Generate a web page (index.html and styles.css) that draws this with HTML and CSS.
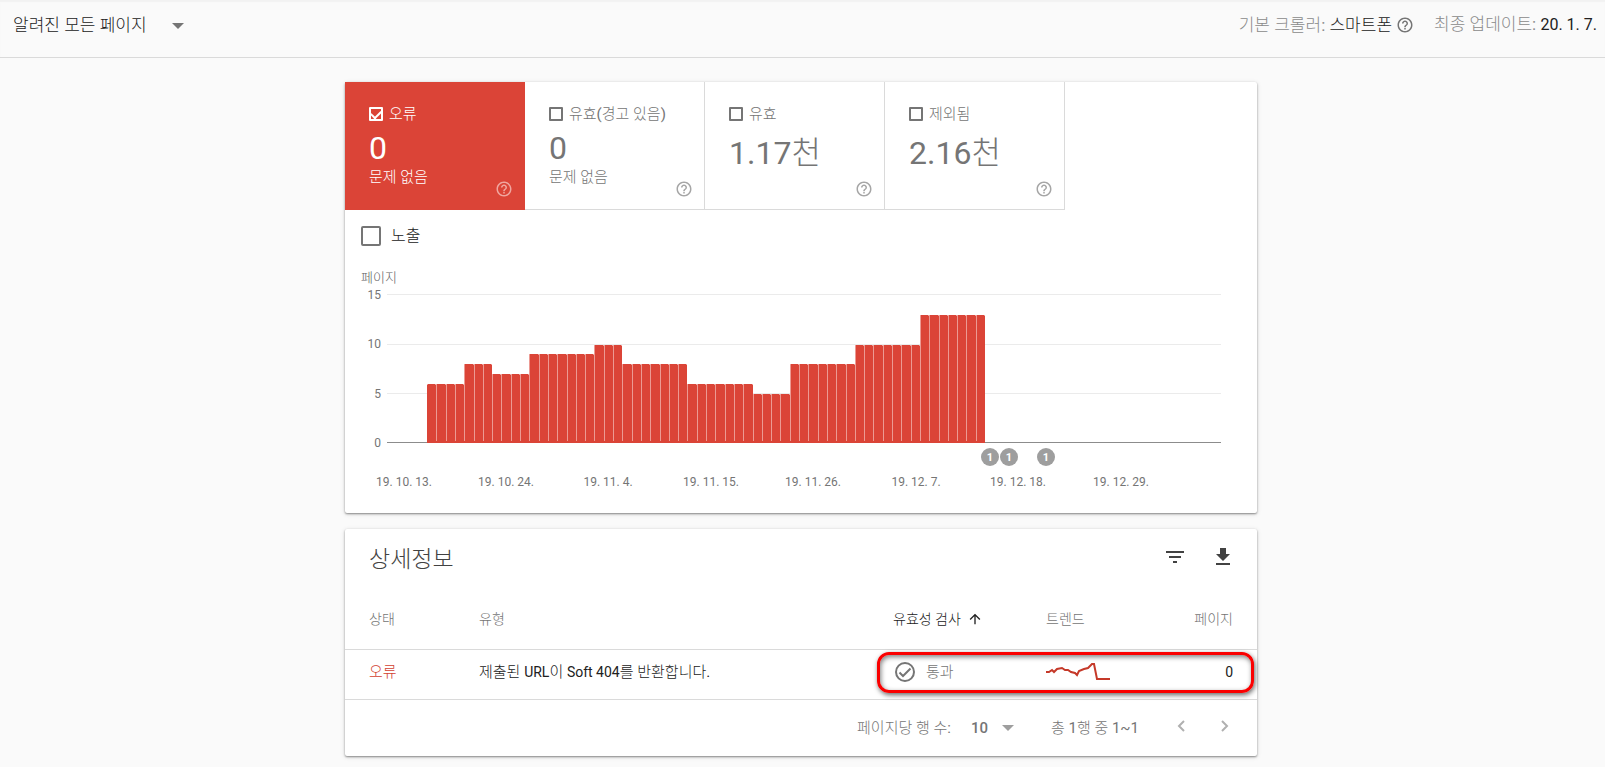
FILE: index.html
```html
<!DOCTYPE html>
<html lang="ko">
<head>
<meta charset="utf-8">
<title>색인 생성 범위</title>
<link rel="stylesheet" href="styles.css">
</head>
<body>
<svg class="defs" aria-hidden="true">
  <symbol id="help" viewBox="0 0 24 24"><path d="M11 18h2v-2h-2v2zm1-16C6.48 2 2 6.48 2 12s4.48 10 10 10 10-4.48 10-10S17.52 2 12 2zm0 18c-4.41 0-8-3.59-8-8s3.59-8 8-8 8 3.59 8 8-3.59 8-8 8zm0-14c-2.21 0-4 1.79-4 4h2c0-1.1.9-2 2-2s2 .9 2 2c0 2-3 1.750-3 5h2c0-2.250 3-2.500 3-5 0-2.210-1.790-4-4-4z"/></symbol>
  <symbol id="caret" viewBox="0 0 12 6"><path d="M0 0h12L6 6z"/></symbol>
</svg>
<header class="topbar">
  <div class="picker picker-page">
    <select aria-label="페이지 필터"><option>알려진 모든 페이지</option></select>
    <svg class="caret"><use href="#caret"/></svg>
  </div>
  <div class="meta">
    <span>기본 크롤러: <b>스마트폰</b></span>
    <button class="help" aria-label="도움말"><svg><use href="#help"/></svg></button>
    <span class="updated">최종 업데이트: <b class="date">20. 1. 7.</b></span>
  </div>
</header>
<main>
  <section class="card">
    <div class="tabs">
      <div class="tab active">
        <div class="tab-body">
          <label><input type="checkbox" class="box" checked>오류</label>
          <div class="value">0</div>
          <div class="note">문제 없음</div>
        </div>
        <button class="help" aria-label="도움말"><svg><use href="#help"/></svg></button>
      </div>
      <div class="tab">
        <div class="tab-body">
          <label><input type="checkbox" class="box">유효(경고 있음)</label>
          <div class="value">0</div>
          <div class="note">문제 없음</div>
        </div>
        <button class="help" aria-label="도움말"><svg><use href="#help"/></svg></button>
      </div>
      <div class="tab">
        <div class="tab-body">
          <label><input type="checkbox" class="box">유효</label>
          <div class="value tall">1.17천</div>
        </div>
        <button class="help" aria-label="도움말"><svg><use href="#help"/></svg></button>
      </div>
      <div class="tab">
        <div class="tab-body">
          <label><input type="checkbox" class="box">제외됨</label>
          <div class="value tall">2.16천</div>
        </div>
        <button class="help" aria-label="도움말"><svg><use href="#help"/></svg></button>
      </div>
    </div>
    <label class="impressions"><input type="checkbox" class="box large">노출</label>
    <svg class="chart" viewBox="0 1 912 257" role="img" aria-label="날짜별 오류 페이지">
      <text class="axis-title" x="16" y="27">페이지</text>
      <g class="grid"><path d="M42 39.500H876M42 89.500H876M42 138.500H876"/></g>
      <path class="baseline" d="M42 187.500H876"/>
      <g class="ticks-y">
        <text x="36" y="44">15</text><text x="36" y="93">10</text><text x="36" y="143">5</text><text x="36" y="192">0</text>
      </g>
      <g id="bars"></g>
      <g class="ticks-x">
        <text x="59" y="231">19. 10. 13.</text><text x="161" y="231">19. 10. 24.</text><text x="263" y="231">19. 11. 4.</text><text x="366" y="231">19. 11. 15.</text><text x="468" y="231">19. 11. 26.</text><text x="571" y="231">19. 12. 7.</text><text x="673" y="231">19. 12. 18.</text><text x="776" y="231">19. 12. 29.</text>
      </g>
      <g class="markers">
        <circle cx="645" cy="202" r="9"/><circle cx="664" cy="202" r="9"/><circle cx="701" cy="202" r="9"/>
        <text x="645" y="206">1</text><text x="664" y="206">1</text><text x="701" y="206">1</text>
      </g>
    </svg>
  </section>

  <section class="card">
    <div class="toolbar">
      <h2>상세정보</h2>
      <button aria-label="필터"><svg viewBox="0 0 24 24"><path d="M10 18h4v-2h-4v2zM3 6v2h18V6H3zm3 7h12v-2H6v2z"/></svg></button>
      <button aria-label="다운로드"><svg viewBox="0 0 24 24"><path d="M19 9h-4V3H9v6H5l7 7 7-7zM5 18v2h14v-2H5z"/></svg></button>
    </div>
    <div class="table-wrap">
      <table>
        <colgroup><col class="c-state"><col><col class="c-check"><col class="c-trend"><col class="c-pages"></colgroup>
        <thead>
          <tr><th>상태</th><th>유형</th><th class="sorted"><span class="with-icon">유효성 검사 <svg viewBox="0 0 24 24"><path d="M4 12l1.410 1.410L11 7.830V20h2V7.830l5.580 5.590L20 12l-8-8-8 8z"/></svg></span></th><th>트렌드</th><th>페이지</th></tr>
        </thead>
        <tbody>
          <tr>
            <td class="error">오류</td>
            <td>제출된 <span class="latin">URL</span>이 <span class="latin">Soft 404</span>를 반환합니다.</td>
            <td class="passed"><span class="with-icon"><svg viewBox="0 0 24 24"><circle cx="12" cy="12" r="9"/><path d="M6.500 12.500l3.500 3.500 7.500-7.500"/></svg>통과</span></td>
            <td><svg class="spark" viewBox="0 0 64 20"><path d="M0 10H3L6 8L8 10L11 7L16 6L19 8H22L25 10L29 11L31 13L33 9L38 7L42 6L46 2H48L51 17H64"/></svg></td>
            <td><span class="latin">0</span></td>
          </tr>
        </tbody>
      </table>
      <div class="highlight"></div>
    </div>
    <footer class="pager">
      <label for="rows">페이지당 행 수:</label>
      <div class="picker picker-rows">
        <select id="rows"><option>10</option></select>
        <svg class="caret"><use href="#caret"/></svg>
      </div>
      <span class="range">총 1행 중 1~1</span>
      <button aria-label="이전" disabled><svg viewBox="0 0 24 24"><path d="M15 7l-5 5 5 5"/></svg></button>
      <button aria-label="다음" disabled><svg viewBox="0 0 24 24"><path d="M9 7l5 5-5 5"/></svg></button>
    </footer>
  </section>
</main>
<script src="chart.js"></script>
</body>
</html>
```
FILE: styles.css
```css
* { box-sizing: border-box; }

body {
  margin: 0;
  background: #fafafa;
  color: #212121;
  font: 15px/20px Roboto, "Noto Sans CJK KR Light", "Noto Sans CJK KR", sans-serif;
}

.defs { display: none; }

svg { display: block; fill: currentColor; }

b { font-weight: 400; color: #212121; }

button {
  flex: none;
  width: 24px;
  height: 24px;
  padding: 0;
  border: 0;
  background: none;
  color: inherit;
}

button svg { width: 100%; height: 100%; }

.help { width: 18px; height: 18px; color: #757575; }

.latin { font-size: 14px; }

/* Top bar */
.topbar {
  display: flex;
  align-items: center;
  justify-content: space-between;
  height: 58px;
  padding: 0 8px 8px 13px;
  border-bottom: 1px solid #dadada;
  box-shadow: inset 0 2px 1px #f2f2f2;
  font-size: 17px;
}

.picker { display: grid; align-items: center; }

.picker > * { grid-area: 1 / 1; }

.picker select {
  appearance: none;
  margin: 0;
  padding: 0;
  border: 0;
  background: none;
  color: inherit;
  font: inherit;
}

.picker-page select { padding-right: 37px; }

.caret {
  justify-self: end;
  width: 12px;
  height: 6px;
  color: #757575;
  pointer-events: none;
}

.picker-page .caret { margin-top: 2px; }

.meta { display: flex; align-items: center; color: #8a8a8a; }

.meta .help { margin: 0 20px 0 4px; }

.date { font-size: 16px; }

/* Cards */
main { padding: 24px 3px 8px 0; }

.card {
  max-width: 912px;
  margin: 0 auto;
  border-radius: 2px;
  background: #fff;
  box-shadow: 0 1px 2px rgba(0, 0, 0, .4), 0 1px 5px rgba(0, 0, 0, .14);
}

.card + .card { margin-top: 16px; }

.tabs { display: flex; }

.tab {
  display: flex;
  flex: 0 1 180px;
  justify-content: space-between;
  height: 128px;
  padding: 22px 11px 11px 24px;
  border: solid #dadada;
  border-width: 0 1px 1px 0;
  color: #757575;
}

.tab.active { border-color: #db4437; background: #db4437; color: #fff; }

.tab-body { flex: 1; white-space: nowrap; }

.tab .help { align-self: flex-end; margin-left: -18px; color: #a6a6a6; }

.tab.active .help { color: #f0a69f; }

label { display: flex; align-items: center; }

.box {
  appearance: none;
  display: grid;
  place-items: center;
  width: 14px;
  height: 14px;
  margin: 0 6px 0 0;
  border: 2px solid;
  border-radius: 1px;
  color: inherit;
}

.box:checked::before {
  content: "";
  width: 8px;
  height: 5px;
  margin-bottom: 2px;
  border: solid;
  border-width: 0 0 2px 2px;
  rotate: -45deg;
}

.box.large {
  width: 20px;
  height: 20px;
  margin-right: 10px;
  border-radius: 2px;
  color: #757575;
}

.value { margin-top: 6px; font-size: 32px; line-height: 37px; }

.value.tall { line-height: 47px; }

.impressions { height: 46px; padding: 6px 16px 0; font-size: 16px; }

/* Chart */
.chart { width: 100%; height: auto; font-size: 12px; fill: #757575; }

.axis-title { font-size: 13px; fill: #616161; }

.grid { stroke: #ebebeb; }

.baseline { stroke: #8c8c8c; }

.ticks-y { text-anchor: end; }

.ticks-x, .markers { text-anchor: middle; }

.bar { fill: #db4437; }

.bar-gap { stroke: #ec9a93; }

.markers circle { fill: #9e9e9e; }

.markers text { fill: #fff; font-size: 11px; font-weight: 700; }

/* Details */
.toolbar {
  display: flex;
  align-items: center;
  gap: 24px;
  height: 60px;
  padding: 0 22px 4px 24px;
  color: #424242;
}

.toolbar h2 { flex: 1; margin: 6px 0 0; font-size: 23px; font-weight: 400; }

.table-wrap { position: relative; }

table { width: 100%; table-layout: fixed; border-collapse: collapse; }

.c-state { width: 134px; }
.c-check { width: 153px; }
.c-trend { width: 90px; }
.c-pages { width: 121px; }

th, td { padding: 0; border-bottom: 1px solid #dadada; text-align: left; }

th { height: 60px; color: #757575; font-size: 14px; font-weight: 400; }

td { height: 50px; padding-bottom: 4px; }

th:first-child, td:first-child { padding-left: 24px; }

th:last-child, td:last-child { padding-right: 24px; text-align: right; }

.sorted { color: #212121; }

.error { color: #d23f31; }

.with-icon { display: flex; align-items: center; }

.sorted svg { width: 16px; height: 16px; margin-left: 6px; }

.passed { color: #757575; }

.passed svg {
  width: 24px;
  height: 24px;
  margin-right: 9px;
  fill: none;
  stroke: currentColor;
  stroke-width: 2;
}

.spark { width: 64px; height: 20px; fill: none; stroke: #c53929; stroke-width: 2; }

.highlight {
  position: absolute;
  right: 3px;
  bottom: 7px;
  width: 377px;
  height: 41px;
  border: 3px solid #fa0000;
  border-radius: 12px;
  box-shadow: 1px 2px 5px rgba(0, 0, 0, .6), inset 1px 2px 5px rgba(0, 0, 0, .5);
  pointer-events: none;
}

.pager {
  display: flex;
  align-items: center;
  justify-content: flex-end;
  height: 56px;
  padding-right: 20px;
  color: #757575;
}

.picker-rows { width: 43px; margin: 0 37px 0 20px; font-weight: 500; }

.picker-rows .caret { color: #9e9e9e; }

.range { margin-right: 30px; }

.pager button { margin-bottom: 4px; color: #b0b0b0; }

.pager button + button { margin-left: 20px; }

.pager button svg { fill: none; stroke: currentColor; stroke-width: 2; }
```
FILE: chart.js
```js
// Runs of consecutive days: [pages with errors, number of days]
const runs = [[6, 4], [8, 3], [7, 4], [9, 7], [10, 3], [8, 7], [6, 7], [5, 4], [8, 7], [10, 7], [13, 7]];
const left = 82, base = 188, dayWidth = 9.3, unit = 9.85;
const bars = document.getElementById("bars");

function add(tag, attrs) {
  const el = document.createElementNS("http://www.w3.org/2000/svg", tag);
  for (const key in attrs) el.setAttribute(key, attrs[key]);
  bars.appendChild(el);
}

let day = 0;
for (const [count, days] of runs) {
  for (let i = 0; i < days; i++, day++) {
    const x = Math.round(left + day * dayWidth);
    const next = Math.round(left + (day + 1) * dayWidth);
    const y = Math.round(base - count * unit);
    add("path", { class: "bar", d: `M${x} ${base}V${y + 1}l1-1H${next - 1}l1 1V${base}z` });
    if (day > 0) add("path", { class: "bar-gap", d: `M${x + 0.5} ${y + 1}V${base - 2}` });
  }
}
```
